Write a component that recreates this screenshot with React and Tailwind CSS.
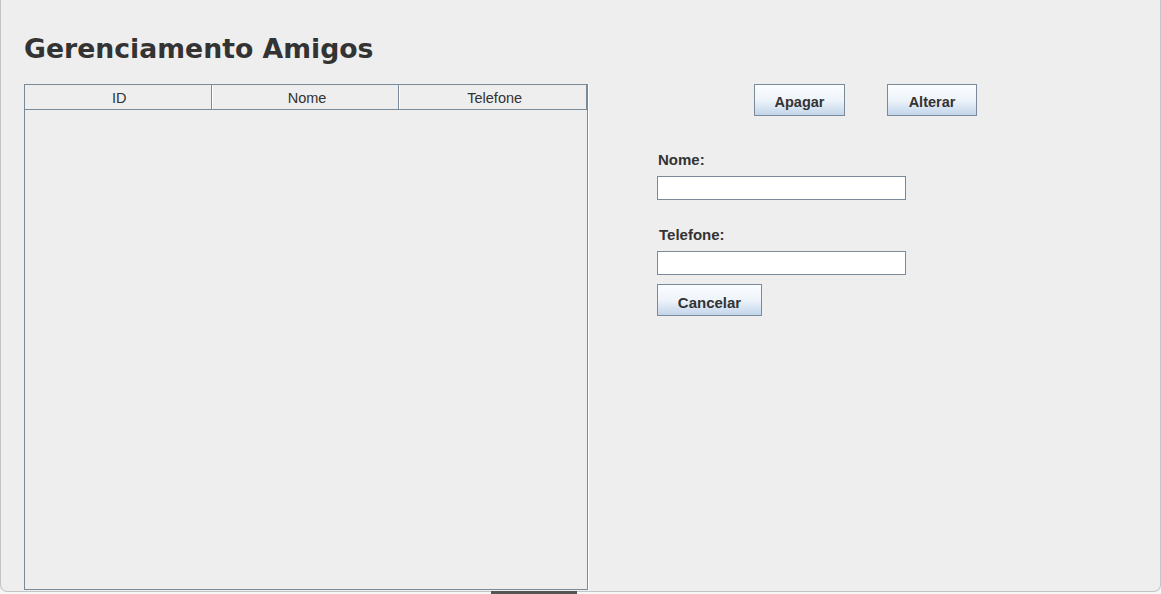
import React from 'react';

const columns = ['ID', 'Nome', 'Telefone'];

const SwingButton = ({ label, className = '' }) => (
  <button
    type="button"
    className={`h-[32px] pt-[4px] border border-[#7a8a99] bg-gradient-to-b from-[#fbfdff] via-[#eef4fb] to-[#c3d5ea] text-[14.5px] font-bold text-[#333333] leading-none ${className}`}
  >
    {label}
  </button>
);

const App = () => {
  return (
    <div className="relative w-[1161px] h-[594px] bg-[#f6f6f6] overflow-hidden font-['Liberation_Sans',Arial,sans-serif]">
      {/* Window body */}
      <div className="h-[592px] bg-[#eeeeee] border-b border-x border-[#c4c4c4] rounded-b-[7px] pt-[32px] pl-[23px]">
        <h1 className="font-['DejaVu_Sans',sans-serif] font-bold text-[26.7px] leading-[33px] text-[#333333]">
          Gerenciamento Amigos
        </h1>

        <div className="flex mt-[19px]">
          {/* Table */}
          <div className="w-[564px] h-[506px] border border-[#7a8a99] shadow-[1px_0_0_#ffffff] flex flex-col">
            <div className="flex h-[25px] border-b border-[#7a8a99]">
              {columns.map((col, i) => (
                <div
                  key={col}
                  className={`flex-1 flex items-center justify-center pt-[3px] pl-[3px] text-[14.5px] text-[#333333] border-r border-[#7a8a99] ${
                    i > 0 ? 'border-l border-l-white' : ''
                  }`}
                >
                  {col}
                </div>
              ))}
            </div>
            <div className="flex-1" />
          </div>

          {/* Right panel */}
          <div className="flex flex-col">
            <div className="flex ml-[166px] gap-[42px]">
              <SwingButton label="Apagar" className="w-[91px]" />
              <SwingButton label="Alterar" className="w-[90px]" />
            </div>

            <div className="flex flex-col items-start ml-[69px]">
              <label className="mt-[36px] ml-[1px] text-[15px] leading-[16px] font-bold text-[#333333]">Nome:</label>
              <input
                type="text"
                className="mt-[8px] w-[249px] h-[24px] bg-white border border-[#7a8a99] outline-none"
              />
              <label className="mt-[27px] ml-[2px] text-[15px] leading-[16px] font-bold text-[#333333]">Telefone:</label>
              <input
                type="text"
                className="mt-[8px] w-[249px] h-[24px] bg-white border border-[#7a8a99] outline-none"
              />
              <SwingButton label="Cancelar" className="mt-[9px] w-[105px] text-[15px]" />
            </div>
          </div>
        </div>
      </div>

      {/* taskbar hint */}
      <div className="absolute bottom-0 left-[491px] w-[86px] h-[3px] bg-[#555555]" />
    </div>
  );
};

export default App;
